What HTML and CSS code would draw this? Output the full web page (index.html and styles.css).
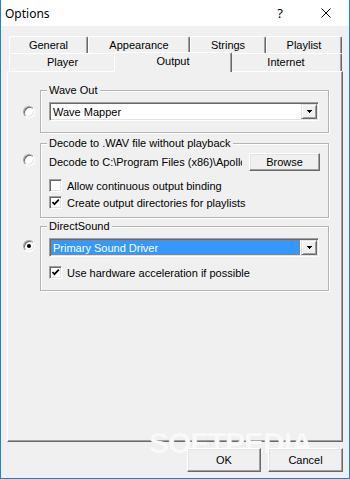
FILE: index.html
```html
<!DOCTYPE html>
<html lang="en">
<head>
    <meta charset="utf-8">
    <title>Options</title>
    <link rel="stylesheet" href="styles.css">
</head>
<body>
    <div class="window">
        <div class="titlebar">
            <span class="title">Options</span>
            <span class="caption-btn">?</span>
            <span class="caption-btn">
                <svg width="10" height="10" viewBox="0 0 10 10"><path d="M0.5 0.5L9.5 9.5M9.5 0.5L0.5 9.5" stroke="#000" stroke-width="1" fill="none"/></svg>
            </span>
        </div>

        <div class="content">
            <div class="tabs">
                <div class="tabrow back">
                    <div class="tab tab-general">General</div>
                    <div class="tab tab-appearance">Appearance</div>
                    <div class="tab tab-strings">Strings</div>
                    <div class="tab tab-playlist">Playlist</div>
                </div>
                <div class="tabrow front">
                    <div class="tab tab-player">Player</div>
                    <div class="tab tab-output active">Output</div>
                    <div class="tab tab-internet">Internet</div>
                </div>
            </div>

            <div class="panel">
                <div class="option option-wave">
                    <span class="radio"></span>
                    <fieldset class="group group-wave">
                        <legend>Wave Out</legend>
                        <div class="combo">
                            <span class="combo-text">Wave Mapper</span>
                            <span class="combo-btn"><svg width="5" height="3" viewBox="0 0 5 3"><rect x="0" y="0" width="5" height="1"/><rect x="1" y="1" width="3" height="1"/><rect x="2" y="2" width="1" height="1"/></svg></span>
                        </div>
                    </fieldset>
                </div>

                <div class="option option-decode">
                    <span class="radio"></span>
                    <fieldset class="group group-decode">
                        <legend>Decode to .WAV file without playback</legend>
                        <div class="path-row">
                            <span class="path-text">Decode to C:\Program Files (x86)\Apollo</span>
                            <span class="button browse">Browse</span>
                        </div>
                        <div class="check-row first">
                            <span class="checkbox"></span>
                            <span>Allow continuous output binding</span>
                        </div>
                        <div class="check-row">
                            <span class="checkbox checked"><svg width="9" height="9" viewBox="0 0 9 9"><path d="M1.5 4L3.5 6.2L7.8 1.6" stroke="#000" stroke-width="1.7" fill="none"/></svg></span>
                            <span>Create output directories for playlists</span>
                        </div>
                    </fieldset>
                </div>

                <div class="option option-ds">
                    <span class="radio checked"></span>
                    <fieldset class="group group-ds">
                        <legend>DirectSound</legend>
                        <div class="combo">
                            <span class="combo-text selected">Primary Sound Driver</span>
                            <span class="combo-btn"><svg width="5" height="3" viewBox="0 0 5 3"><rect x="0" y="0" width="5" height="1"/><rect x="1" y="1" width="3" height="1"/><rect x="2" y="2" width="1" height="1"/></svg></span>
                        </div>
                        <div class="check-row hw">
                            <span class="checkbox checked"><svg width="9" height="9" viewBox="0 0 9 9"><path d="M1.5 4L3.5 6.2L7.8 1.6" stroke="#000" stroke-width="1.7" fill="none"/></svg></span>
                            <span>Use hardware acceleration if possible</span>
                        </div>
                    </fieldset>
                </div>
            </div>

            <div class="watermark">SOFTPEDIA<sup>®</sup></div>

            <div class="actions">
                <span class="button dialog-btn">OK</span>
                <span class="button dialog-btn">Cancel</span>
            </div>
        </div>
    </div>
</body>
</html>
```

FILE: styles.css
```css
* { box-sizing: border-box; }
body { margin: 0; font-family: "Liberation Sans", Arial, sans-serif; font-size: 11px; color: #000; }

.window { width: 350px; height: 479px; background: #f0f0f0; border: 1px solid #1883d7; border-top: 0; display: flex; flex-direction: column; position: relative; overflow: hidden; }

/* title bar */
.titlebar { height: 26px; background: #fff; display: flex; align-items: center; flex-shrink: 0; }
.title { padding-left: 4px; font-family: "Noto Sans", sans-serif; font-size: 12px; flex: 1; }
.caption-btn { width: 46px; height: 26px; display: flex; align-items: center; justify-content: center; font-family: "Noto Sans", sans-serif; font-size: 13px; }

.content { flex: 1; padding: 10px 6px 0 6px; }

/* tabs */
.tabs { padding: 0 1px 0 2px; }
.tabrow { display: flex; align-items: flex-end; }
.tabrow.back { height: 17px; }
.tabrow.front { height: 18px; }
.tab { height: 100%; display: flex; align-items: center; justify-content: center; background: #f0f0f0; border-top: 1px solid #fff; border-left: 1px solid #fff; border-right: 1px solid #696969; box-shadow: inset -1px 0 #a0a0a0; border-radius: 2px 2px 0 0; padding-bottom: 1px; }
.tab-general { width: 79px; }
.tab-appearance { width: 102px; }
.tab-strings { width: 76px; }
.tab-playlist { width: 76px; }
.tab-player { width: 107px; }
.tab-output { width: 118px; margin: 0 -2px; }
.tab-internet { width: 112px; }
.tab.active { height: 20px; position: relative; top: 1px; z-index: 1; padding-bottom: 3px; }

/* panel */
.panel { height: 371px; border-top: 1px solid #fff; border-left: 1px solid #fff; border-right: 1px solid #696969; border-bottom: 1px solid #696969; box-shadow: inset -1px -1px #a0a0a0; padding: 12px 13px 0 15px; }

.option { display: flex; gap: 5px; align-items: flex-start; }
.option-decode { margin-top: 4px; }
.option-ds { margin-top: 2px; }

.radio { width: 12px; height: 12px; flex-shrink: 0; border-radius: 50%; background: #fff; border: 1px solid; border-color: #a0a0a0 #fff #fff #a0a0a0; box-shadow: inset 1px 1px #696969, inset -1px -1px #e3e3e3; position: relative; }
.radio.checked::after { content: ""; position: absolute; left: 3px; top: 3px; width: 4px; height: 4px; border-radius: 50%; background: #000; }
.option-wave .radio { margin-top: 22px; }
.option-decode .radio { margin-top: 17px; }
.option-ds .radio { margin-top: 20px; }

.group { flex: 1; min-width: 0; margin: 0; border: 1px solid #b4b4b4; box-shadow: inset 1px 1px #fff, 1px 1px #fff; }
.group legend { padding: 0 2px; margin-left: -2px; line-height: 13px; background: #f0f0f0; }
.group-wave { padding: 5px 9px 11px 8px; }
.group-decode { padding: 3px 8px 6px 8px; }
.group-ds { padding: 5px 9px 9px 8px; }

/* combo box */
.combo { height: 19px; display: flex; background: #fff; border: 1px solid; border-color: #a0a0a0 #fff #fff #a0a0a0; box-shadow: inset 1px 1px #696969, inset -1px -1px #e3e3e3; padding: 1px; }
.combo-text { flex: 1; display: flex; align-items: center; padding-left: 2px; white-space: nowrap; }
.combo-text.selected { background: #3399ff; color: #fff; outline: 1px dotted #b5773c; outline-offset: -1px; margin-right: 1px; }
.combo-btn { width: 16px; display: flex; align-items: center; justify-content: center; background: #f0f0f0; border: 1px solid; border-color: #e3e3e3 #696969 #696969 #e3e3e3; box-shadow: inset 1px 1px #fff, inset -1px -1px #a0a0a0; }

/* decode row */
.path-row { display: flex; height: 18px; align-items: center; gap: 7px; }
.path-text { flex: 1; overflow: hidden; white-space: nowrap; }

.button { display: flex; align-items: center; justify-content: center; background: #f0f0f0; border: 1px solid; border-color: #fff #696969 #696969 #fff; box-shadow: inset -1px -1px #a0a0a0, inset 1px 1px #e3e3e3; }
.browse { width: 71px; height: 18px; }

/* check boxes */
.check-row { display: flex; align-items: center; height: 17px; gap: 5px; }
.check-row.first { margin-top: 6px; }
.check-row.hw { margin-top: 7px; }
.checkbox { width: 13px; height: 13px; flex-shrink: 0; background: #fff; border: 1px solid; border-color: #a0a0a0 #fff #fff #a0a0a0; box-shadow: inset 1px 1px #696969, inset -1px -1px #e3e3e3; display: flex; align-items: center; justify-content: center; }

/* bottom buttons */
.actions { display: flex; justify-content: flex-end; gap: 7px; margin-top: 6px; position: relative; }
.dialog-btn { width: 75px; height: 24px; }
.dialog-btn:first-child { width: 74px; }

.watermark { position: absolute; left: 148px; top: 433px; height: 20px; line-height: 20px; font-family: "Liberation Sans", Arial, sans-serif; font-weight: bold; font-size: 30px; letter-spacing: -1px; color: #f9f9f9; text-shadow: 0 0 1px #e4e4e4; pointer-events: none; }
.watermark sup { font-size: 9px; font-weight: normal; vertical-align: top; line-height: 9px; }
```
